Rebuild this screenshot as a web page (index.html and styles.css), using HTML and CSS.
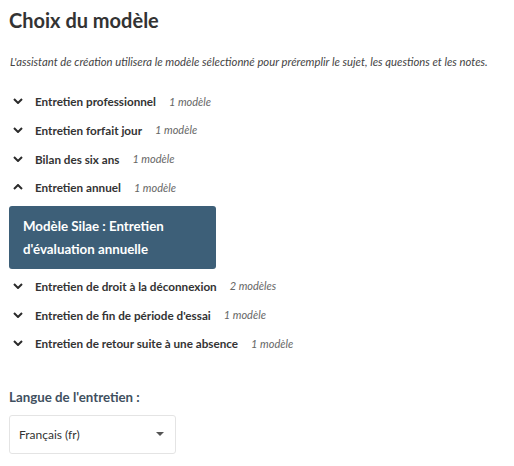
FILE: index.html
```html
<!DOCTYPE html>
<html lang="fr">
<head>
<meta charset="utf-8">
<title>Choix du modèle</title>
<link rel="stylesheet" href="styles.css">
</head>
<body>
<main class="page">
  <h1 class="title">Choix du modèle</h1>
  <p class="desc">L'assistant de création utilisera le modèle sélectionné pour préremplir le sujet, les questions et les notes.</p>

  <ul class="groups">
    <li class="group">
      <div class="row">
        <svg class="chev" viewBox="0 0 10 6" width="10" height="6"><path d="M1 1 L5 5 L9 1" /></svg>
        <span class="name">Entretien professionnel</span>
        <span class="count">1 modèle</span>
      </div>
    </li>
    <li class="group">
      <div class="row">
        <svg class="chev" viewBox="0 0 10 6" width="10" height="6"><path d="M1 1 L5 5 L9 1" /></svg>
        <span class="name">Entretien forfait jour</span>
        <span class="count">1 modèle</span>
      </div>
    </li>
    <li class="group">
      <div class="row">
        <svg class="chev" viewBox="0 0 10 6" width="10" height="6"><path d="M1 1 L5 5 L9 1" /></svg>
        <span class="name">Bilan des six ans</span>
        <span class="count">1 modèle</span>
      </div>
    </li>
    <li class="group open">
      <div class="row">
        <svg class="chev" viewBox="0 0 10 6" width="10" height="6"><path d="M1 5 L5 1 L9 5" /></svg>
        <span class="name">Entretien annuel</span>
        <span class="count">1 modèle</span>
      </div>
      <div class="card">Modèle Silae : Entretien d'évaluation annuelle</div>
    </li>
    <li class="group">
      <div class="row">
        <svg class="chev" viewBox="0 0 10 6" width="10" height="6"><path d="M1 1 L5 5 L9 1" /></svg>
        <span class="name">Entretien de droit à la déconnexion</span>
        <span class="count">2 modèles</span>
      </div>
    </li>
    <li class="group">
      <div class="row">
        <svg class="chev" viewBox="0 0 10 6" width="10" height="6"><path d="M1 1 L5 5 L9 1" /></svg>
        <span class="name">Entretien de fin de période d'essai</span>
        <span class="count">1 modèle</span>
      </div>
    </li>
    <li class="group">
      <div class="row">
        <svg class="chev" viewBox="0 0 10 6" width="10" height="6"><path d="M1 1 L5 5 L9 1" /></svg>
        <span class="name">Entretien de retour suite à une absence</span>
        <span class="count">1 modèle</span>
      </div>
    </li>
  </ul>

  <div class="lang">
    <label class="lang-label">Langue de l'entretien :</label>
    <div class="select">
      <span class="select-value">Français (fr)</span>
      <span class="caret"></span>
    </div>
  </div>
</main>
</body>
</html>
```

FILE: styles.css
```css
html, body {
  margin: 0;
  padding: 0;
  background: #ffffff;
}

body {
  font-family: Lato, "Open Sans", "Liberation Sans", sans-serif;
  color: #333333;
}

.page {
  padding: 0 9px;
}

.title {
  margin: 0;
  padding-top: 6px;
  font-size: 20px;
  line-height: 28px;
  font-weight: 700;
  color: #333333;
}

.desc {
  margin: 20px 0 0 1px;
  font-size: 11.3px;
  line-height: 16px;
  font-style: italic;
  color: #444444;
}

.groups {
  list-style: none;
  margin: 17px 0 0 0;
  padding: 0;
}

.row {
  display: flex;
  align-items: center;
  height: 28.67px;
  padding-left: 4px;
}

.chev {
  flex: none;
  fill: none;
  stroke: #2b2b2b;
  stroke-width: 2;
  margin-right: 12px;
}

.name {
  font-size: 11.7px;
  font-weight: 700;
  color: #333333;
}

.count {
  margin-left: 13px;
  font-size: 11px;
  font-style: italic;
  color: #666666;
}

.card {
  margin: 4px 0 3px 0;
  width: 179px;
  padding: 9px 14px 8px 14px;
  background: #3d5f78;
  border-radius: 3px;
  color: #ffffff;
  font-size: 13.3px;
  font-weight: 700;
  line-height: 23px;
}

.lang {
  margin-top: 30px;
}

.lang-label {
  display: block;
  font-size: 13.3px;
  font-weight: 700;
  color: #3f5060;
  line-height: 18px;
}

.select {
  margin-top: 9px;
  border: 1px solid #e4e4e4;
  border-radius: 3px;
  display: flex;
  align-items: center;
  justify-content: space-between;
  padding: 0 11px 0 9px;
  box-sizing: border-box;
  width: 167px;
  height: 39px;
}

.select-value {
  font-size: 12px;
  color: #333333;
}

.caret {
  width: 0;
  height: 0;
  border-left: 4px solid transparent;
  border-right: 4px solid transparent;
  border-top: 4px solid #555555;
}
```
